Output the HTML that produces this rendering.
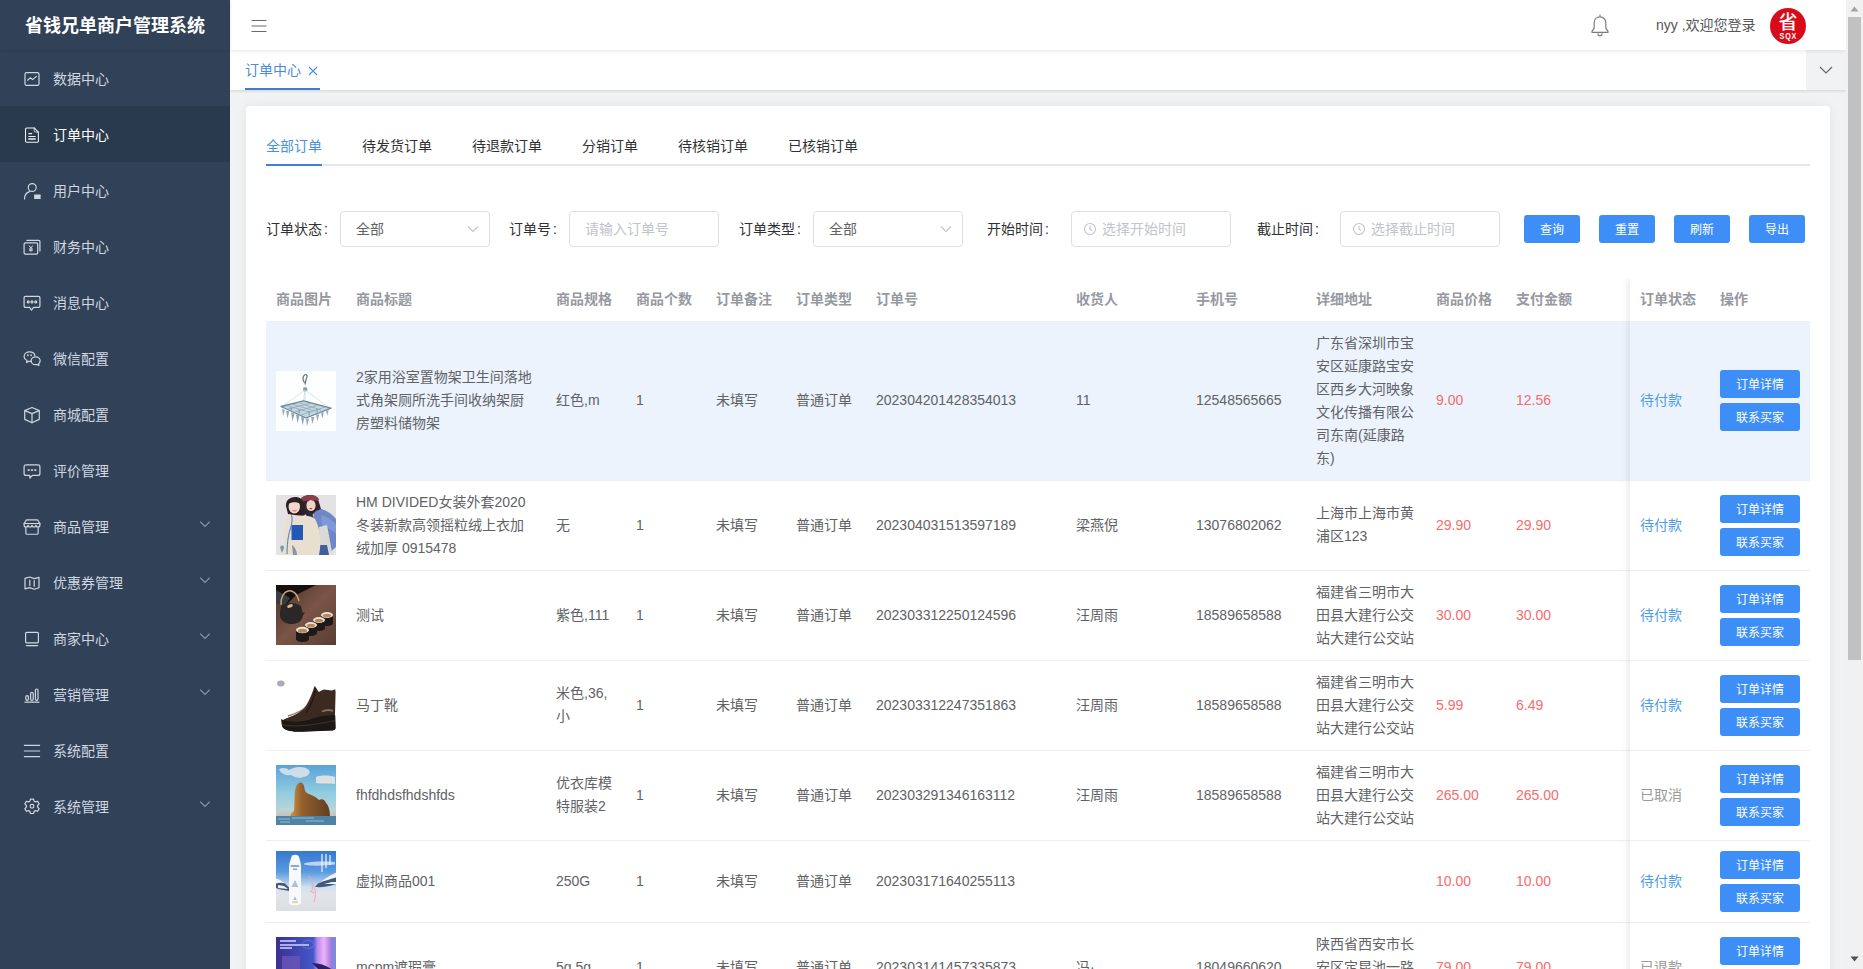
<!DOCTYPE html>
<html lang="zh-CN">
<head>
<meta charset="utf-8">
<title>省钱兄单商户管理系统</title>
<style>
*{box-sizing:border-box;margin:0;padding:0}
html,body{width:1863px;height:969px;overflow:hidden;background:#f1f2f4;font-family:"Liberation Sans","Noto Sans CJK SC",sans-serif;font-size:14px;color:#606266}
#app{position:relative;width:1863px;height:969px;overflow:hidden}
/* sidebar */
#side{position:absolute;left:0;top:0;width:230px;height:969px;background:#314158;z-index:5}
#side h1{position:absolute;left:0;top:0;width:230px;height:50px;line-height:52px;text-align:center;color:#fff;font-size:18px;font-weight:bold;background:#314158;box-shadow:0 1px 3px rgba(0,0,0,.12)}
#menu{position:absolute;left:0;top:50px;width:230px;list-style:none}
#menu li{position:relative;height:56px;line-height:58px;padding-left:53px;color:#cfd7e1;font-size:14px}
#menu li.on{background:#2a3a4d;color:#fff}
#menu li svg.ic{position:absolute;left:24px;top:21px;width:16px;height:16px;overflow:visible;fill:none;stroke:#cfd7e1;stroke-width:1.2;stroke-linecap:round;stroke-linejoin:round}
#menu li.on svg.ic{stroke:#eef2f6}
#menu li svg.big{transform:scale(1.1);stroke-width:1.100}
#menu li svg.ar{position:absolute;left:198.500px;top:20px;width:12px;height:12px;fill:none;stroke:#8c98a8;stroke-width:1.2}
/* top bar */
#top{position:absolute;left:230px;top:0;width:1616px;height:50px;background:#fff;box-shadow:0 1px 4px rgba(0,21,41,.1);z-index:3}
#tags{position:absolute;left:230px;top:50px;width:1616px;height:40px;background:#fff;box-shadow:0 1px 3px rgba(0,0,0,.14);z-index:2}

#top .ham{position:absolute;left:21px;top:19px;width:16px;height:14px;stroke:#6b6b6b;stroke-width:1.2;fill:none}
#top .bell{position:absolute;left:1360px;top:14px;width:20px;height:23px;stroke:#7d7d7d;stroke-width:1.2;fill:none;stroke-linejoin:round;stroke-linecap:round}
#top .hello{position:absolute;left:1426px;top:0;height:50px;line-height:50px;font-size:14px;color:#555;white-space:nowrap}
#top .ava{position:absolute;left:1540px;top:8px;width:36px;height:36px;border-radius:50%;background:#d80c18;color:#fff;text-align:center;overflow:hidden}
#top .ava b{display:block;font-size:19px;line-height:20px;font-weight:500;margin-top:5px}
#top .ava em{display:block;font-style:normal;font-weight:bold;font-size:9px;line-height:9px;letter-spacing:1px;padding-left:1px;margin-top:-1px;transform:scaleX(.8)}
#tags .tab{position:absolute;left:15px;top:0;width:75px;height:40px;line-height:41px;color:#4b8bd8;font-size:14px;border-bottom:2px solid #3f7acc;white-space:nowrap}
#tags .tab svg{position:absolute;left:63px;top:15.500px;width:10px;height:10px;stroke:#4a8fe0;stroke-width:1.100;fill:none}
#tags .more{position:absolute;left:1576px;top:0;width:40px;height:40px;background:#f1f2f4}
#tags .more svg{position:absolute;left:13px;top:14px;width:14px;height:12px;stroke:#666;stroke-width:1.200;fill:none}
/* card */
#card{position:absolute;left:246px;top:106px;width:1584px;height:900px;background:#fff;border-radius:4px;box-shadow:0 0 12px rgba(0,0,0,.06)}

#itabs{position:absolute;left:20px;top:20px;width:1544px;height:40px;border-bottom:2px solid #e4e7ed}
#itabs span{position:absolute;top:0;height:40px;line-height:40px;font-size:14px;color:#303133;white-space:nowrap}
#itabs span.on{color:#4a8fe0}
#itabs i{position:absolute;left:0;top:38px;width:56px;height:2px;background:#3f7fd6}
#filt{position:absolute;left:0;top:105px;width:1584px;height:36px}
#filt label{position:absolute;top:0;height:36px;line-height:36px;font-size:14px;color:#303133;white-space:nowrap}
#filt label b{font-weight:normal;margin-left:2px}
#filt .inp{position:absolute;top:0;height:36px;border:1px solid #dcdfe6;border-radius:4px;background:#fff;line-height:34px;font-size:14px;color:#606266;padding-left:15px;white-space:nowrap}
#filt .inp.ph{color:#c0c4cc}
#filt .inp svg.ch{position:absolute;right:10px;top:12px;width:12px;height:10px;stroke:#c0c4cc;stroke-width:1.100;fill:none}
#filt .inp svg.ck{position:absolute;left:11px;top:10px;width:14px;height:14px;stroke:#c0c4cc;stroke-width:1.100;fill:none}
#filt .inp.dt{padding-left:30px}
.btn{position:absolute;height:28px;line-height:30px;overflow:hidden;background:#3e8ef7;color:#fff;font-size:12px;text-align:center;border-radius:3px;white-space:nowrap}
#filt .btn{top:4px;width:56px}

#tbl{position:absolute;left:20px;top:172px;width:1544px;height:760px;font-size:14px;color:#606266;line-height:23px}
#tbl .thead{position:absolute;left:0;top:0;width:1544px;height:44px;border-bottom:1px solid #ebeef5}
#tbl .th{position:absolute;top:0;height:43px;line-height:43px;padding-left:10px;font-weight:bold;color:#96999f;white-space:nowrap}
#tbl .tr{position:absolute;left:0;width:1544px;border-bottom:1px solid #ebeef5}
#tbl .tr.cur{background:#ecf3fd}
#tbl .td{position:absolute;top:0;bottom:0;padding:0 10px;display:flex;align-items:center;white-space:nowrap}
#tbl .tr.cur .td:not(.ad) p,#tbl .tr.cur .op>div{margin-bottom:1px}
#tbl p.two{margin-bottom:1px}
#tbl .td.red{color:#f56c6c}
#tbl .td.blue{color:#4f9de7}
#tbl .td.gray{color:#999}
#tbl .pic{width:60px;height:60px;display:block}
#tbl .tr:not(.cur) .pic{margin-bottom:1px}
#tbl .op .btn{position:static;display:block;width:80px}
#tbl .op .btn+.btn{margin-top:5px}
#tbl .fixsh{position:absolute;left:1364px;top:0;width:180px;height:760px;box-shadow:-2px 0 7px rgba(0,0,0,.09);clip-path:inset(0 0 0 -14px);pointer-events:none}
/* scrollbar */
#sb{position:absolute;left:1846px;top:0;width:17px;height:969px;background:#f1f1f1;z-index:9}
#sb i{position:absolute;left:2px;top:17px;width:13px;height:643px;background:#c1c1c1}
</style>
</head>
<body>
<div id="app">
<svg id="defs" width="0" height="0" style="position:absolute"><defs>
<linearGradient id="g5" x1="0" y1="0" x2="0" y2="1"><stop offset="0" stop-color="#5aa3d8"/><stop offset=".45" stop-color="#8fcbe0"/><stop offset=".75" stop-color="#b9d6d6"/><stop offset=".85" stop-color="#c9c2bd"/></linearGradient>
<linearGradient id="g5r" x1="0" y1="0" x2="1" y2="0"><stop offset="0" stop-color="#cf9748"/><stop offset=".3" stop-color="#96602c"/><stop offset="1" stop-color="#5f3f24"/></linearGradient>
<linearGradient id="g6" x1="0" y1="0" x2="0" y2="1"><stop offset="0" stop-color="#3578cf"/><stop offset=".35" stop-color="#5b9be0"/><stop offset=".6" stop-color="#cfe0f0"/><stop offset=".7" stop-color="#e1e4e8"/><stop offset="1" stop-color="#dcdfe2"/></linearGradient>
<linearGradient id="g7" x1="0" y1="0" x2="1" y2="0"><stop offset="0" stop-color="#3b2f8f"/><stop offset=".3" stop-color="#3f44ad"/><stop offset=".62" stop-color="#4556c8"/><stop offset=".69" stop-color="#b48cf0"/><stop offset=".8" stop-color="#f0b0f8"/><stop offset=".92" stop-color="#a07ae0"/><stop offset="1" stop-color="#6e8fe0"/></linearGradient>
<linearGradient id="g3" x1="0" y1="0" x2="1" y2="1"><stop offset="0" stop-color="#4a3229"/><stop offset=".5" stop-color="#7a5546"/><stop offset="1" stop-color="#5a3d32"/></linearGradient>
<g id="i1"><rect width="60" height="60" fill="#fdfefe"/>
<path d="M28.500 11.500c-2-2-2-6 0-7.500 2.500-1.500 3.500 1.500 1.500 4.500l-1 5" fill="none" stroke="#6a7980" stroke-width="1.300"/>
<circle cx="29.200" cy="18.300" r="2.200" fill="#86a7a8"/>
<path d="M29 19 5.500 36M29 19 54 37.500M29 19 29.500 46M29 19 27.500 30" stroke="#b7cdd0" stroke-width=".5" fill="none"/>
<path d="M5 35.500 27.500 29.800 55 37.200 30 47z" fill="#c5d6e0" stroke="#6e8895" stroke-width="1.300" stroke-linejoin="round"/>
<path d="M10 34.500 33 41M16 33 39 40M22 31.500 45 39M12 38 35 32M19 41 42 34M25 44 49 36" stroke="#8eaab8" stroke-width=".8"/>
<path d="M6 38l1.200 7 1.600-6zM10 39.500l1.500 8 1.800-7zM15 41.500l1.500 9 2-8zM20 43.500l1.500 9 2-8zM25 45.500l1.500 9 2-8zM30 47.500l1 8 2-8zM35 46l1.500 7 1.800-7zM40 43.500l1.500 7 1.500-7zM45 41.500l1.300 6 1.500-6zM50 39.500l1.200 5 1.500-5zM14 36l1 6 1.500-5zM22 38l1 7 1.500-6zM32 40l1 6 1.500-6zM40 38l1 5 1.500-5z" fill="#8fa9b8"/>
</g>
<g id="i2"><rect width="60" height="60" fill="#e3e3e4"/>
<path d="M37 13c8 0 17 3 23 11v28l-9 8H41z" fill="#6d87c9"/>
<path d="M45 20c5 1 10 4 15 9v10c-4-4-9-7-14-8z" fill="#7f99d6"/>
<path d="M43 32l8-2 5 27-6 3h-6z" fill="#d9d9d6"/>
<path d="M39 50h12l2 10H38z" fill="#41609a"/>
<path d="M27 2c4-3 13-3 15 2l3 10-5 2-7 7-7-7z" fill="#33222a"/>
<path d="M25 3c5-4 15-4 18 1l-1 2c-5-1-11-1-16 1z" fill="#8d3c48"/>
<ellipse cx="35" cy="10.500" rx="4.600" ry="5.600" fill="#f0d2c6"/>
<path d="M33.500 13.600h2.600" stroke="#b03a48" stroke-width="1.100"/>
<path d="M32 16l4 2 2 6-5-2z" fill="#2a2a38"/>
<path d="M10 11C9 0 27-1 28 9l1 11-7 3-10-4z" fill="#2c2024"/>
<ellipse cx="18.300" cy="11.600" rx="5.700" ry="6.800" fill="#f3d7ca"/>
<path d="M12 9c2-6 11-6 13 0-4-2.500-9-2.500-13 0z" fill="#2c2024"/>
<path d="M16.500 15.200c1.200 1 2.800 1 4 0" stroke="#c0505a" stroke-width=".9" fill="none"/>
<path d="M13 19c9 3 22 0 26 5 5 9 7 22 4 36H6c2-13 1-28 7-41z" fill="#e9dfd0"/>
<rect x="15.500" y="30" width="11.500" height="15" fill="#2358b6"/>
<path d="M15 19c2 4 1 10-1 16s-3 16-3 24" fill="none" stroke="#4a78c8" stroke-width="1"/>
<path d="M4 52c2-2 4-2 4 1l-2 5zM16 50c3 2 5 6 5 10h-4z" fill="#8a93a8"/>
</g>
<g id="i3"><rect width="60" height="60" fill="url(#g3)"/>
<path d="M0 0h40L20 10 8 22 0 16z" fill="#15100e"/>
<path d="M0 5l14 8-6 9-8-5z" fill="#3a3c44"/>
<path d="M5 20c-1-16 14-20 18-4" fill="none" stroke="#c8a878" stroke-width="1.400"/>
<path d="M5 21c6-4 14-4 20 0l2 9c-1 7-6 9-12 9S3 35 4 28z" fill="#2a2726"/>
<path d="M25 28l4-1-3 5z" fill="#2a2726"/>
<ellipse cx="14" cy="21" rx="3" ry="1.600" fill="#d8b890" transform="rotate(-20 14 21)"/>
<path d="M45 30h12v8c0 4-12 4-12 0z" fill="#1e1a19"/><ellipse cx="51" cy="30" rx="6" ry="3" fill="#f2e4d6"/><ellipse cx="51" cy="30.600" rx="4.200" ry="1.800" fill="#b8875e"/>
<path d="M37 35h12v8c0 4-12 4-12 0z" fill="#1e1a19"/><ellipse cx="43" cy="35" rx="6" ry="3" fill="#f2e4d6"/><ellipse cx="43" cy="35.600" rx="4.200" ry="1.800" fill="#b8875e"/>
<path d="M29 40h12v8c0 4-12 4-12 0z" fill="#1e1a19"/><ellipse cx="35" cy="40" rx="6" ry="3" fill="#f2e4d6"/><ellipse cx="35" cy="40.600" rx="4.200" ry="1.800" fill="#b8875e"/>
<path d="M20 45h13v9c0 4-13 4-13 0z" fill="#1e1a19"/><ellipse cx="26.500" cy="45" rx="6.500" ry="3.200" fill="#f2e4d6"/><ellipse cx="26.500" cy="45.700" rx="4.600" ry="2" fill="#b8875e"/>
</g>
<g id="i4"><rect width="60" height="60" fill="#fff"/>
<ellipse cx="4.800" cy="8.500" rx="3.800" ry="3" fill="#a9abb8"/>
<path d="M38.700 10.800l4 6.200 5-2.400 8.300.8 3.200-1.200.4 3-.6 22.300.4 13.200c0 1.600-1.200 2.400-3 2.600l-30 1.200c-8 .4-16-.8-19.400-3.800-1.800-2.600-1.600-6.400 1.200-8.400 8-3.400 17-6 22.600-14.800 3.400-5.600 5.600-12.200 7.900-18.700z" fill="#3c2a21"/>
<path d="M5.200 44c6 3.600 20 3.600 32-.6 8-2.800 14-3.400 22-3.400l.4 13c0 1.600-1.200 2.400-3 2.600l-30 1.200c-8 .4-16-.8-19.400-3.800-1.500-2.400-2-6-2-9z" fill="#1d1816"/>
<path d="M39.500 13c-1 8-4 17-9.500 25" stroke="#1f1512" stroke-width="1.100" fill="none"/>
<path d="M12 41c6-2 12-4 17-8" stroke="#6a4e3e" stroke-width="1.600" fill="none" opacity=".7"/>
<path d="M46 36.500c4-1.600 8-1.600 11-.6" stroke="#8a7466" stroke-width="1.800" fill="none"/>
<path d="M6 49.500c10 3 30 1 53-4" stroke="#4a3a32" stroke-width=".8" fill="none"/>
</g>
<g id="i5"><rect width="60" height="60" fill="url(#g5)"/>
<path d="M3 4c4-2 8-1 10 1 6-4 16-4 20 0 2 4-2 7-6 7-4 2-9 0-12-2-5 1-10-1-12-6z" fill="#dfe6ea" opacity=".85"/>
<path d="M40 12c4-2 14-2 19 0v7c-6-1-14 0-19-1z" fill="#e6e6e2" opacity=".9"/>
<path d="M14 51c1-3 3-4 4-5 1-10 0-20 2-24 1-4 5-6 7-3 2 3 1 7 4 9 4 2 8 3 12 7 3-2 6 0 7 3 3 3 4 8 4 14z" fill="url(#g5r)"/>
<rect y="51" width="60" height="9" fill="#4f83a6"/>
<path d="M2 54h12M16 53h22M30 56h18M4 57h10" stroke="#a9c8dc" stroke-width=".8"/>
</g>
<g id="i6"><rect width="60" height="60" fill="url(#g6)"/>
<path d="M28 12.500c6-2 20-2.500 31-1.500v2.500c-10 1-23 2-31 0z" fill="#dbe7f6" opacity=".8"/>
<path d="M0 27.500c3 0 6 2 9 5l4 4v3.500C8 39 3 38.500 0 37z" fill="#44587c"/><path d="M0 27.500c3 0 6 2 9 5-3-1-6-1-9 0zM2 34l6 1 4 3-10-1z" fill="#eef3f8"/>
<path d="M60 21.500c-7 3-13 7-18 11l-3 3.500c7 .5 15-.5 21-3z" fill="#44587c"/><path d="M60 21.500c-7 3-13 7-18 11 6-3 12-4 18-6zM48 33l8-2 4 0v2z" fill="#eef3f8"/>
<path d="M15.500 6c0-3 7-3 7.500 0 1 3 2 6 2 10v36c0 3-12 3-12 0V16c0-4 1.500-7 2.500-10z" fill="#f7f9fc"/>
<path d="M14.800 14h8.400v2h-8.400zM17 17.500h4v1.500h-4z" fill="#8fa6d0"/><path d="M15.500 36l3.500-7 3.500 7zM17 49l2-3.500 2 3.500z" fill="#a9c0e0"/><rect x="16" y="50" width="6" height="2.200" fill="#e6d4b0"/>
<path d="M46 3v18M50 3v14M54 4v10" stroke="#f2f6fc" stroke-width="1.200"/>
<path d="M33 25c3 3 4 9 3 15M37 34c3 4 3 10 1 17M34 40l4 2" stroke="#f2a6b8" stroke-width="1" fill="none"/>
</g>
<g id="i7"><rect width="60" height="60" fill="url(#g7)"/>
<path d="M4 4h16M4 8h29M4 11h12" stroke="#cfd4ff" stroke-width="1.600"/>
<ellipse cx="32" cy="7.500" rx="6" ry="4" fill="none" stroke="#8f9cf0" stroke-width=".4"/>
<rect x="6" y="19" width="18" height="20" fill="#6a55b8" opacity=".8"/>
<path d="M36 26c8 0 16 3 22 8H44z" fill="#2b1f6a"/>
</g>
</defs></svg>
<div id="side">
<h1>省钱兄单商户管理系统</h1>
<ul id="menu">
<li><svg class="ic" viewBox="0 0 16 16"><rect x="1" y="1.6" width="14" height="12.8" rx="1.6"/><path d="M3.6 9.2 6.4 6.8 8.6 8.6 12.4 5.4"/></svg>数据中心</li>
<li class="on"><svg class="ic" viewBox="0 0 16 16" style="stroke-width:1.050"><path d="M2.800 .9h7.400l4.200 4.200v8.800a1.300 1.300 0 0 1-1.300 1.300H2.800a1.300 1.300 0 0 1-1.300-1.300V2.200A1.300 1.300 0 0 1 2.800 .9z"/><path d="M10.200 .9v3a1.200 1.200 0 0 0 1.200 1.200h3" stroke-width=".8"/><path d="M4.800 6.600h3M4.800 9.400h6.400"/><path d="M4.800 12h6.400" stroke-width="1.500"/></svg>订单中心</li>
<li><svg class="ic big" viewBox="0 0 16 16"><circle cx="8.200" cy="4.800" r="3.600"/><path d="M1.200 15.200c0-3.400 2-5.800 4.600-6.600"/><path d="M10.400 11.800h5M10.400 13.200h5M10.400 14.600h5" stroke-width="1.300"/></svg>用户中心</li>
<li><svg class="ic big" viewBox="0 0 16 16"><rect x="0.800" y="4.200" width="12.400" height="10.200" rx="1.200"/><path d="M3.400 2h10.800a1 1 0 0 1 1 1v8.600"/><path d="M5.600 7l1.400 2 1.400-2M7 9v3M5.600 9.800h2.800M5.600 11h2.800" stroke-width="0.900"/></svg>财务中心</li>
<li><svg class="ic big" viewBox="0 0 16 16"><path d="M2 2h12a1.200 1.200 0 0 1 1.200 1.200v7.600a1.200 1.200 0 0 1-1.200 1.200H9.400L7.600 14.400 5.800 12H2a1.200 1.200 0 0 1-1.200-1.200V3.200A1.200 1.200 0 0 1 2 2z"/><circle cx="4.600" cy="7" r="0.900"/><circle cx="8" cy="7" r="0.900"/><circle cx="11.400" cy="7" r="0.900"/></svg>消息中心</li>
<li><svg class="ic big" viewBox="0 0 16 16"><path d="M7.200 10.200a6 6 0 0 1-2-.2L3 11.200l.4-1.900A4.200 4.200 0 0 1 .8 5.800C.8 3.400 3 1.600 5.800 1.600c2.400 0 4.400 1.300 4.900 3.200"/><path d="M15.400 9.600c0-2-1.800-3.600-4.100-3.600s-4.100 1.600-4.100 3.600 1.800 3.600 4.100 3.600c.5 0 1-.1 1.400-.2l1.600.9-.3-1.600a3.400 3.400 0 0 0 1.400-2.700z"/><circle cx="4.200" cy="4.600" r="0.300"/><circle cx="7.200" cy="4.600" r="0.300"/></svg>微信配置</li>
<li><svg class="ic big" viewBox="0 0 16 16"><path d="M8 1.200 14.600 4v8L8 15 1.400 12V4z"/><path d="M1.400 4 8 6.800 14.600 4M8 6.800V15"/></svg>商城配置</li>
<li><svg class="ic big" viewBox="0 0 16 16"><path d="M2.600 2.400h10.800a1.800 1.800 0 0 1 1.800 1.800v6a1.800 1.800 0 0 1-1.800 1.800H8.400L6 14.400V12H2.600a1.800 1.800 0 0 1-1.800-1.800v-6a1.800 1.800 0 0 1 1.800-1.800z"/><path d="M4.600 7.200h.8M7.600 7.200h.8M10.600 7.200h.8" stroke-width="1.500"/></svg>评价管理</li>
<li><svg class="ic big" viewBox="0 0 16 16"><path d="M3 1.600h10l2.200 3.200v1.400a1.800 1.800 0 0 1-3.600 0 1.800 1.800 0 0 1-3.600 0 1.800 1.800 0 0 1-3.600 0 1.800 1.800 0 0 1-3.600 0V4.800z"/><path d="M2.400 8.400v5a1.200 1.200 0 0 0 1.200 1.200h8.800a1.200 1.200 0 0 0 1.200-1.200v-5M.8 4.800h14.400"/></svg>商品管理<svg class="ar" viewBox="0 0 12 12"><path d="M1.200 3.600 6 8.400l4.800-4.800"/></svg></li>
<li><svg class="ic" viewBox="0 0 16 16"><path d="M1 3.400 5.600 2l4.800 1.600L15 2.400v10.400l-4.600 1.400-4.800-1.600L1 13.800z"/><path d="M5.800 5v5.600M10.200 5.600v5.600"/></svg>优惠券管理<svg class="ar" viewBox="0 0 12 12"><path d="M1.200 3.600 6 8.400l4.800-4.800"/></svg></li>
<li><svg class="ic" viewBox="0 0 16 16"><rect x="1.600" y="1.400" width="12.800" height="10.400" rx="1"/><path d="M2.400 14.600h11.200"/></svg>商家中心<svg class="ar" viewBox="0 0 12 12"><path d="M1.200 3.600 6 8.400l4.800-4.800"/></svg></li>
<li><svg class="ic" viewBox="0 0 16 16"><rect x="1.800" y="8.600" width="2.600" height="4.800" rx="1.300"/><rect x="6.600" y="5.400" width="2.600" height="8" rx="1.300"/><rect x="11.400" y="2" width="2.600" height="11.400" rx="1.300"/><path d="M1 15.200h14"/></svg>营销管理<svg class="ar" viewBox="0 0 12 12"><path d="M1.200 3.600 6 8.400l4.800-4.800"/></svg></li>
<li><svg class="ic" viewBox="0 0 16 16"><path d="M.4 2.400h15.200M.4 8h15.200M.4 13.600h15.200"/></svg>系统配置</li>
<li><svg class="ic big" viewBox="0 0 16 16"><path d="M6.600.8h2.800l.5 1.900 1.300.7 1.900-.6 1.400 2.400-1.400 1.400v1.500l1.400 1.400-1.400 2.400-1.900-.6-1.300.7-.5 1.900H6.600l-.5-1.900-1.300-.7-1.900.6-1.400-2.400 1.400-1.400V6.600L1.500 5.200l1.400-2.400 1.900.6 1.300-.7z"/><circle cx="8" cy="7.400" r="1.700"/></svg>系统管理<svg class="ar" viewBox="0 0 12 12"><path d="M1.200 3.600 6 8.400l4.800-4.800"/></svg></li>
</ul>
</div>
<div id="top">
<svg class="ham" viewBox="0 0 16 14"><path d="M.5 1.500h15M.5 7h15M.5 12.500h15"/></svg>
<svg class="bell" viewBox="0 0 20 23"><path d="M10 1.200v1.600M10 2.800c-3.400 0-5.800 2.600-5.800 6v5.400L2 17.400v1h16v-1l-2.200-3.200V8.800c0-3.400-2.400-6-5.800-6z"/><path d="M8 19.800a2 2 0 0 0 4 0"/></svg>
<span class="hello">nyy ,欢迎您登录</span>
<div class="ava"><b>省</b><em>SQX</em></div>
</div>
<div id="tags">
<div class="tab">订单中心<svg viewBox="0 0 10 10"><path d="M1 1l8 8M9 1l-8 8"/></svg></div>
<div class="more"><svg viewBox="0 0 14 12"><path d="M1 3l6 6 6-6"/></svg></div>
</div>
<div id="card">
<div id="itabs"><span class="on" style="left:0">全部订单</span><span style="left:96px">待发货订单</span><span style="left:206px">待退款订单</span><span style="left:316px">分销订单</span><span style="left:412px">待核销订单</span><span style="left:522px">已核销订单</span><i></i></div>
<div id="filt">
<label style="left:20px">订单状态<b>:</b></label><div class="inp" style="left:94px;width:150px">全部<svg class="ch" viewBox="0 0 12 10"><path d="M1 2.500l5 5 5-5"/></svg></div>
<label style="left:263px">订单号<b>:</b></label><div class="inp ph" style="left:323px;width:150px">请输入订单号</div>
<label style="left:493px">订单类型<b>:</b></label><div class="inp" style="left:567px;width:150px">全部<svg class="ch" viewBox="0 0 12 10"><path d="M1 2.500l5 5 5-5"/></svg></div>
<label style="left:741px">开始时间<b>:</b></label><div class="inp ph dt" style="left:825px;width:160px"><svg class="ck" viewBox="0 0 14 14"><circle cx="7" cy="7" r="5.500"/><path d="M7 3.800V7.200l2.200 1.400"/></svg>选择开始时间</div>
<label style="left:1011px">截止时间<b>:</b></label><div class="inp ph dt" style="left:1094px;width:160px"><svg class="ck" viewBox="0 0 14 14"><circle cx="7" cy="7" r="5.500"/><path d="M7 3.800V7.200l2.200 1.400"/></svg>选择截止时间</div>
<div class="btn" style="left:1278px">查询</div><div class="btn" style="left:1353px">重置</div><div class="btn" style="left:1428px">刷新</div><div class="btn" style="left:1503px">导出</div>
</div>
<div id="tbl">
<div class="thead">
<div class="th" style="left:0px;width:80px">商品图片</div>
<div class="th" style="left:80px;width:200px">商品标题</div>
<div class="th" style="left:280px;width:80px">商品规格</div>
<div class="th" style="left:360px;width:80px">商品个数</div>
<div class="th" style="left:440px;width:80px">订单备注</div>
<div class="th" style="left:520px;width:80px">订单类型</div>
<div class="th" style="left:600px;width:200px">订单号</div>
<div class="th" style="left:800px;width:120px">收货人</div>
<div class="th" style="left:920px;width:120px">手机号</div>
<div class="th" style="left:1040px;width:120px">详细地址</div>
<div class="th" style="left:1160px;width:80px">商品价格</div>
<div class="th" style="left:1240px;width:124px">支付金额</div>
<div class="th" style="left:1364px;width:80px">订单状态</div>
<div class="th" style="left:1444px;width:100px">操作</div>
</div>
<div class="tr cur" style="top:44px;height:159px">
<div class="td" style="left:0px;width:80px"><svg class="pic" viewBox="0 0 60 60"><use href="#i1"/></svg></div>
<div class="td" style="left:80px;width:200px"><p>2家用浴室置物架卫生间落地<br>式角架厕所洗手间收纳架厨<br>房塑料储物架</p></div>
<div class="td" style="left:280px;width:80px"><p>红色,m</p></div>
<div class="td" style="left:360px;width:80px"><p>1</p></div>
<div class="td" style="left:440px;width:80px"><p>未填写</p></div>
<div class="td" style="left:520px;width:80px"><p>普通订单</p></div>
<div class="td" style="left:600px;width:200px"><p>202304201428354013</p></div>
<div class="td" style="left:800px;width:120px"><p>11</p></div>
<div class="td" style="left:920px;width:120px"><p>12548565665</p></div>
<div class="td ad" style="left:1040px;width:120px"><p>广东省深圳市宝<br>安区延康路宝安<br>区西乡大河映象<br>文化传播有限公<br>司东南(延康路<br>东)</p></div>
<div class="td red" style="left:1160px;width:80px"><p>9.00</p></div>
<div class="td red" style="left:1240px;width:124px"><p>12.56</p></div>
<div class="td blue" style="left:1364px;width:80px"><p>待付款</p></div>
<div class="td op" style="left:1444px;width:100px"><div><span class="btn">订单详情</span><span class="btn">联系买家</span></div></div>
</div>
<div class="tr" style="top:203px;height:90px">
<div class="td" style="left:0px;width:80px"><svg class="pic" viewBox="0 0 60 60"><use href="#i2"/></svg></div>
<div class="td" style="left:80px;width:200px"><p>HM DIVIDED女装外套2020<br>冬装新款高领摇粒绒上衣加<br>绒加厚 0915478</p></div>
<div class="td" style="left:280px;width:80px"><p>无</p></div>
<div class="td" style="left:360px;width:80px"><p>1</p></div>
<div class="td" style="left:440px;width:80px"><p>未填写</p></div>
<div class="td" style="left:520px;width:80px"><p>普通订单</p></div>
<div class="td" style="left:600px;width:200px"><p>202304031513597189</p></div>
<div class="td" style="left:800px;width:120px"><p>梁燕倪</p></div>
<div class="td" style="left:920px;width:120px"><p>13076802062</p></div>
<div class="td ad" style="left:1040px;width:120px"><p class="two">上海市上海市黄<br>浦区123</p></div>
<div class="td red" style="left:1160px;width:80px"><p>29.90</p></div>
<div class="td red" style="left:1240px;width:124px"><p>29.90</p></div>
<div class="td blue" style="left:1364px;width:80px"><p>待付款</p></div>
<div class="td op" style="left:1444px;width:100px"><div><span class="btn">订单详情</span><span class="btn">联系买家</span></div></div>
</div>
<div class="tr" style="top:293px;height:90px">
<div class="td" style="left:0px;width:80px"><svg class="pic" viewBox="0 0 60 60"><use href="#i3"/></svg></div>
<div class="td" style="left:80px;width:200px"><p>测试</p></div>
<div class="td" style="left:280px;width:80px"><p>紫色,111</p></div>
<div class="td" style="left:360px;width:80px"><p>1</p></div>
<div class="td" style="left:440px;width:80px"><p>未填写</p></div>
<div class="td" style="left:520px;width:80px"><p>普通订单</p></div>
<div class="td" style="left:600px;width:200px"><p>202303312250124596</p></div>
<div class="td" style="left:800px;width:120px"><p>汪周雨</p></div>
<div class="td" style="left:920px;width:120px"><p>18589658588</p></div>
<div class="td ad" style="left:1040px;width:120px"><p>福建省三明市大<br>田县大建行公交<br>站大建行公交站</p></div>
<div class="td red" style="left:1160px;width:80px"><p>30.00</p></div>
<div class="td red" style="left:1240px;width:124px"><p>30.00</p></div>
<div class="td blue" style="left:1364px;width:80px"><p>待付款</p></div>
<div class="td op" style="left:1444px;width:100px"><div><span class="btn">订单详情</span><span class="btn">联系买家</span></div></div>
</div>
<div class="tr" style="top:383px;height:90px">
<div class="td" style="left:0px;width:80px"><svg class="pic" viewBox="0 0 60 60"><use href="#i4"/></svg></div>
<div class="td" style="left:80px;width:200px"><p>马丁靴</p></div>
<div class="td" style="left:280px;width:80px"><p class="two">米色,36,<br>小</p></div>
<div class="td" style="left:360px;width:80px"><p>1</p></div>
<div class="td" style="left:440px;width:80px"><p>未填写</p></div>
<div class="td" style="left:520px;width:80px"><p>普通订单</p></div>
<div class="td" style="left:600px;width:200px"><p>202303312247351863</p></div>
<div class="td" style="left:800px;width:120px"><p>汪周雨</p></div>
<div class="td" style="left:920px;width:120px"><p>18589658588</p></div>
<div class="td ad" style="left:1040px;width:120px"><p>福建省三明市大<br>田县大建行公交<br>站大建行公交站</p></div>
<div class="td red" style="left:1160px;width:80px"><p>5.99</p></div>
<div class="td red" style="left:1240px;width:124px"><p>6.49</p></div>
<div class="td blue" style="left:1364px;width:80px"><p>待付款</p></div>
<div class="td op" style="left:1444px;width:100px"><div><span class="btn">订单详情</span><span class="btn">联系买家</span></div></div>
</div>
<div class="tr" style="top:473px;height:90px">
<div class="td" style="left:0px;width:80px"><svg class="pic" viewBox="0 0 60 60"><use href="#i5"/></svg></div>
<div class="td" style="left:80px;width:200px"><p>fhfdhdsfhdshfds</p></div>
<div class="td" style="left:280px;width:80px"><p class="two">优衣库模<br>特服装2</p></div>
<div class="td" style="left:360px;width:80px"><p>1</p></div>
<div class="td" style="left:440px;width:80px"><p>未填写</p></div>
<div class="td" style="left:520px;width:80px"><p>普通订单</p></div>
<div class="td" style="left:600px;width:200px"><p>202303291346163112</p></div>
<div class="td" style="left:800px;width:120px"><p>汪周雨</p></div>
<div class="td" style="left:920px;width:120px"><p>18589658588</p></div>
<div class="td ad" style="left:1040px;width:120px"><p>福建省三明市大<br>田县大建行公交<br>站大建行公交站</p></div>
<div class="td red" style="left:1160px;width:80px"><p>265.00</p></div>
<div class="td red" style="left:1240px;width:124px"><p>265.00</p></div>
<div class="td gray" style="left:1364px;width:80px"><p>已取消</p></div>
<div class="td op" style="left:1444px;width:100px"><div><span class="btn">订单详情</span><span class="btn">联系买家</span></div></div>
</div>
<div class="tr" style="top:563px;height:82px">
<div class="td" style="left:0px;width:80px"><svg class="pic" viewBox="0 0 60 60"><use href="#i6"/></svg></div>
<div class="td" style="left:80px;width:200px"><p>虚拟商品001</p></div>
<div class="td" style="left:280px;width:80px"><p>250G</p></div>
<div class="td" style="left:360px;width:80px"><p>1</p></div>
<div class="td" style="left:440px;width:80px"><p>未填写</p></div>
<div class="td" style="left:520px;width:80px"><p>普通订单</p></div>
<div class="td" style="left:600px;width:200px"><p>202303171640255113</p></div>
<div class="td red" style="left:1160px;width:80px"><p>10.00</p></div>
<div class="td red" style="left:1240px;width:124px"><p>10.00</p></div>
<div class="td blue" style="left:1364px;width:80px"><p>待付款</p></div>
<div class="td op" style="left:1444px;width:100px"><div><span class="btn">订单详情</span><span class="btn">联系买家</span></div></div>
</div>
<div class="tr" style="top:645px;height:90px">
<div class="td" style="left:0px;width:80px"><svg class="pic" viewBox="0 0 60 60"><use href="#i7"/></svg></div>
<div class="td" style="left:80px;width:200px"><p>mcpm遮瑕膏</p></div>
<div class="td" style="left:280px;width:80px"><p>5g,5g</p></div>
<div class="td" style="left:360px;width:80px"><p>1</p></div>
<div class="td" style="left:440px;width:80px"><p>未填写</p></div>
<div class="td" style="left:520px;width:80px"><p>普通订单</p></div>
<div class="td" style="left:600px;width:200px"><p>202303141457335873</p></div>
<div class="td" style="left:800px;width:120px"><p>冯·</p></div>
<div class="td" style="left:920px;width:120px"><p>18049660620</p></div>
<div class="td ad" style="left:1040px;width:120px"><p>陕西省西安市长<br>安区定昆池一路<br>8号</p></div>
<div class="td red" style="left:1160px;width:80px"><p>79.00</p></div>
<div class="td red" style="left:1240px;width:124px"><p>79.00</p></div>
<div class="td gray" style="left:1364px;width:80px"><p>已退款</p></div>
<div class="td op" style="left:1444px;width:100px"><div><span class="btn">订单详情</span><span class="btn">联系买家</span></div></div>
</div>
<div class="fixsh"></div>
</div>
</div>
<div id="sb"><i></i><svg style="position:absolute;left:4px;top:6px" width="9" height="6" viewBox="0 0 9 6"><path d="M4.500 .5 8.500 5.500H.5z" fill="#a3a3a3"/></svg><svg style="position:absolute;left:4px;top:956px" width="9" height="6" viewBox="0 0 9 6"><path d="M.5 .5h8l-4 5z" fill="#505050"/></svg></div>
</div>
</body>
</html>
